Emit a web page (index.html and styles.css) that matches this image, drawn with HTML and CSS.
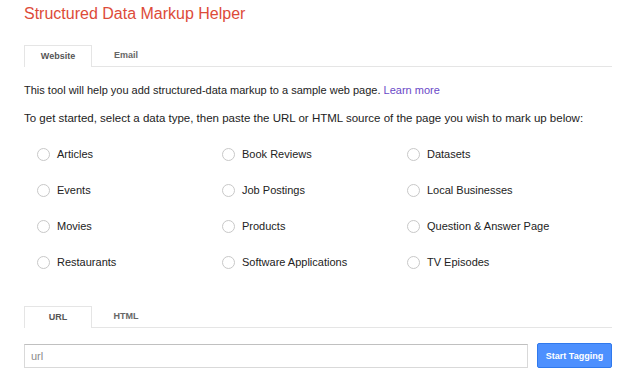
FILE: index.html
```html
<!DOCTYPE html>
<html lang="en">
  <head>
    <meta charset="UTF-8" />
    <title>Structured Data Markup Helper</title>
    <link rel="stylesheet" href="styles.css">
  </head>
  <body>
    <div class="container">
      <h1>Structured Data Markup Helper</h1>

      <div class="tabs">
        <div class="tab active">Website</div>
        <div class="tab">Email</div>
      </div>

      <p class="intro lead">
        This tool will help you add structured-data markup to a sample web page.
        <a href="#">Learn more</a>
      </p>
      <p class="intro">
        To get started, select a data type, then paste the URL or HTML source of the page you wish to mark up below:
      </p>

      <div class="types">
        <label class="type"><span class="radio"></span>Articles</label>
        <label class="type"><span class="radio"></span>Book Reviews</label>
        <label class="type"><span class="radio"></span>Datasets</label>
        <label class="type"><span class="radio"></span>Events</label>
        <label class="type"><span class="radio"></span>Job Postings</label>
        <label class="type"><span class="radio"></span>Local Businesses</label>
        <label class="type"><span class="radio"></span>Movies</label>
        <label class="type"><span class="radio"></span>Products</label>
        <label class="type"><span class="radio"></span>Question &amp; Answer Page</label>
        <label class="type"><span class="radio"></span>Restaurants</label>
        <label class="type"><span class="radio"></span>Software Applications</label>
        <label class="type"><span class="radio"></span>TV Episodes</label>
      </div>

      <div class="tabs source-tabs">
        <div class="tab active">URL</div>
        <div class="tab">HTML</div>
      </div>

      <div class="url-row">
        <input type="text" class="url-input" placeholder="url" />
        <button class="start">Start Tagging</button>
      </div>
    </div>
  </body>
</html>
```

FILE: styles.css
```css
body {
  font-family: "Liberation Sans", Arial, sans-serif;
  margin: 0;
  color: #222;
  background: #fff;
}
.container {
  width: 588px;
  padding-left: 24px;
}
h1 {
  margin: 5px 0 0;
  font-size: 16px;
  line-height: 18px;
  font-weight: normal;
  color: #dd4b39;
}
.tabs {
  display: flex;
  margin-top: 22px;
  height: 21px;
  border-bottom: 1px solid #e5e5e5;
}
.tab {
  width: 68px;
  height: 21px;
  box-sizing: border-box;
  text-align: center;
  font-size: 9px;
  font-weight: bold;
  line-height: 20px;
  color: #666;
}
.tab.active {
  border: 1px solid #e5e5e5;
  border-bottom: none;
  background: #fff;
  height: 22px;
  color: #555;
}
.intro {
  font-size: 11.5px;
  line-height: 14px;
  margin: 0;
}
.intro.lead {
  font-size: 11px;
}
.tabs + .intro {
  margin-top: 16px;
}
.intro + .intro {
  margin-top: 14px;
}
a {
  color: #6a49c7;
  text-decoration: none;
}
.types {
  display: grid;
  grid-template-columns: 185px 185px 185px;
  row-gap: 22px;
  padding-left: 13px;
  margin-top: 22px;
}
.type {
  display: flex;
  align-items: center;
  gap: 7px;
  height: 14px;
  font-size: 11px;
  color: #222;
}
.radio {
  width: 13px;
  height: 13px;
  box-sizing: border-box;
  border: 1px solid #c8c8c8;
  border-radius: 50%;
  background: #fff;
}
.source-tabs {
  margin-top: 37px;
}
.url-row {
  display: flex;
  align-items: center;
  gap: 9px;
  margin-top: 15px;
}
.url-input {
  width: 504px;
  height: 24px;
  box-sizing: border-box;
  border: 1px solid #d9d9d9;
  border-top-color: #c0c0c0;
  padding: 0 6px;
  font-family: inherit;
  font-size: 11px;
  margin: 0;
  outline: none;
}
.url-input::placeholder {
  color: #8c8c8c;
}
.start {
  width: 75px;
  height: 25px;
  background-color: #4d90fe;
  border: 1px solid #3079ed;
  border-radius: 2px;
  color: #fff;
  font-family: inherit;
  font-size: 9px;
  font-weight: bold;
  padding: 0;
  cursor: pointer;
}
```
